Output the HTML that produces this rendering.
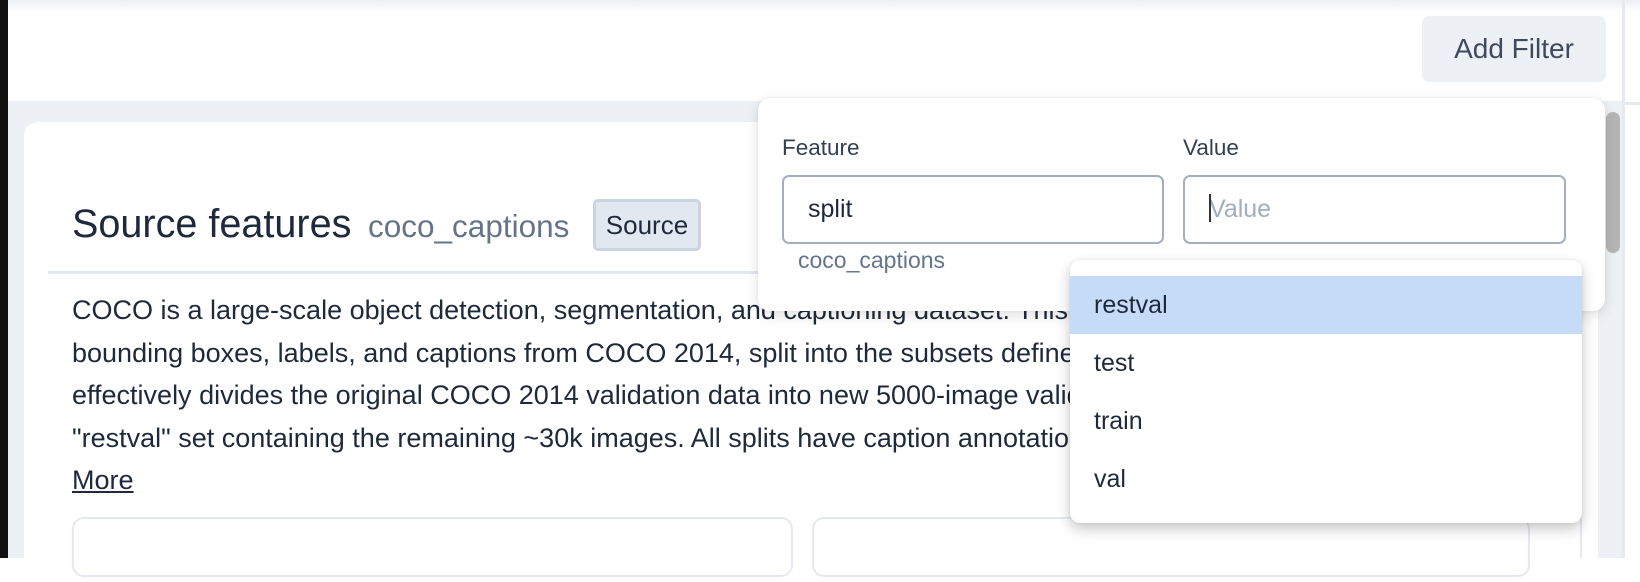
<!DOCTYPE html>
<html><head><meta charset="utf-8"><style>
*{box-sizing:border-box;margin:0;padding:0}
body{width:1640px;height:558px;overflow:hidden;background:#fff;font-family:"Liberation Sans",sans-serif;position:relative;color:#1e293b}
.abs{position:absolute}
</style></head><body>
<div class="abs" style="left:0;top:0;width:1640px;height:12px;background:linear-gradient(#eceef1,#fff)"></div>
<div class="abs" style="left:0;top:0;width:8px;height:558px;background:#111"></div>
<div class="abs" style="left:8px;top:101px;width:1614px;height:457px;background:#edf1f5"></div>
<div class="abs" style="left:1622px;top:0;width:3px;height:558px;background:#e6eaf0"></div>
<div class="abs" style="left:1625px;top:102px;width:15px;height:3px;background:#e6eaf0"></div>
<div class="abs" style="left:1422px;top:16px;width:184px;height:66px;background:#edf1f6;border-radius:7px;font-size:28px;color:#3f4a5c;line-height:66px;text-align:center">Add Filter</div>

<div class="abs" style="left:24px;top:122px;width:1574px;height:460px;background:#fff;border-radius:14px"></div>
<div class="abs" style="left:72px;top:202px;font-size:39.6px;color:#1e293b;white-space:nowrap">Source features</div>
<div class="abs" style="left:368px;top:208px;font-size:31.5px;color:#64748b;white-space:nowrap">coco_captions</div>
<div class="abs" style="left:593px;top:199px;width:108px;height:52px;background:#e2e8f0;border:3px solid #cbd5e1;border-radius:5px;font-size:26px;line-height:46px;text-align:center;color:#1e293b">Source</div>
<div class="abs" style="left:48px;top:271px;width:1530px;height:3px;background:#e2e8f0"></div>
<div class="abs" style="left:72px;top:289px;font-size:27px;line-height:42.5px;color:#1e293b;white-space:nowrap">
COCO is a large-scale object detection, segmentation, and captioning dataset. This version contains images,<br>
bounding boxes, labels, and captions from COCO 2014, split into the subsets defined by Karpathy and Li. This<br>
effectively divides the original COCO 2014 validation data into new 5000-image validation and test sets, and a<br>
"restval" set containing the remaining ~30k images. All splits have caption annotations.<br>
<span style="text-decoration:underline">More</span></div>
<div class="abs" style="left:72px;top:517px;width:721px;height:60px;border:2px solid #e5e9ef;border-radius:12px;background:#fff"></div>
<div class="abs" style="left:812px;top:517px;width:718px;height:60px;border:2px solid #e5e9ef;border-radius:12px;background:#fff"></div>
<div class="abs" style="left:1580px;top:122px;width:14px;height:436px;border-left:2px solid #e5e9ef"></div>

<div class="abs" style="left:1606px;top:112px;width:14px;height:141px;background:#b5b5b5;border-radius:7px"></div>

<div class="abs" style="left:758px;top:98px;width:847px;height:213px;background:#fff;border-radius:12px;box-shadow:0 4px 14px rgba(0,0,0,.12),0 0 3px rgba(0,0,0,.06)"></div>
<div class="abs" style="left:782px;top:135px;font-size:22.5px;color:#334155">Feature</div>
<div class="abs" style="left:1183px;top:135px;font-size:22.5px;color:#334155">Value</div>
<div class="abs" style="left:782px;top:175px;width:382px;height:69px;border:2px solid #a3aec0;border-radius:7px;font-size:25px;line-height:65px;padding-left:24px;color:#1e293b">split</div>
<div class="abs" style="left:1183px;top:175px;width:383px;height:69px;border:2px solid #a3aec0;border-radius:7px;font-size:25px;line-height:65px;padding-left:24px;color:#a0aec0"><span style="display:inline-block;width:2px;height:28px;background:#333;vertical-align:middle;margin-right:-2px;position:relative;top:-2px"></span>Value</div>
<div class="abs" style="left:798px;top:247px;font-size:23px;color:#64748b">coco_captions</div>

<div class="abs" style="left:1070px;top:260px;width:512px;height:263px;background:#fff;border-radius:10px;box-shadow:0 6px 14px rgba(0,0,0,.22),0 0 3px rgba(0,0,0,.08);overflow:hidden;font-size:25px;color:#1e293b">
<div style="margin-top:16px;height:58px;background:#c6dbf8;line-height:58px;padding-left:24px">restval</div>
<div style="height:58px;line-height:58px;padding-left:24px">test</div>
<div style="height:58px;line-height:58px;padding-left:24px">train</div>
<div style="height:58px;line-height:58px;padding-left:24px">val</div>
</div>
</body></html>
